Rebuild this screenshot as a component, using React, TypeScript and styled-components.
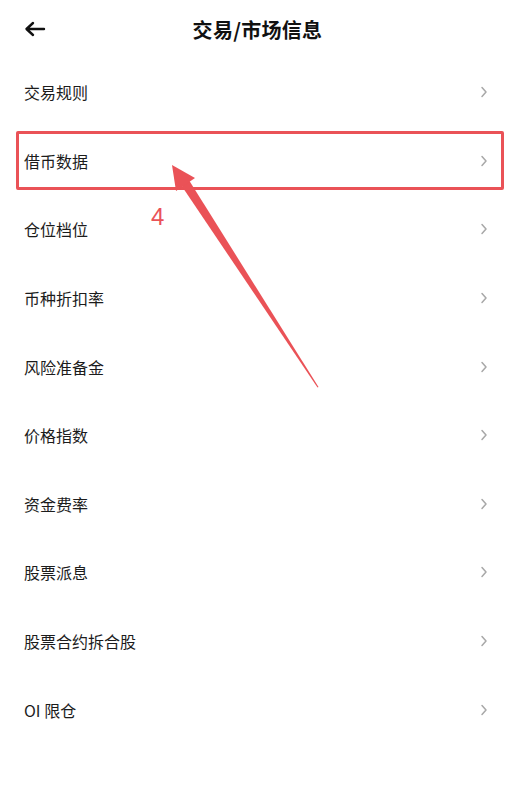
import React from "react";
import styled, { createGlobalStyle } from "styled-components";

const GlobalStyle = createGlobalStyle`
  html, body {
    margin: 0;
    padding: 0;
    background: #ffffff;
  }
  body {
    font-family: "Noto Sans CJK SC", "Noto Sans", sans-serif;
    color: #1a1a1a;
  }
`;

const Page = styled.div`
  position: relative;
  width: 515px;
  height: 805px;
  background: #ffffff;
  overflow: hidden;
`;

const Header = styled.div`
  display: flex;
  align-items: center;
  justify-content: center;
  position: relative;
  height: 58px;
`;

const BackButton = styled.div`
  position: absolute;
  left: 24px;
  top: 20px;
  width: 22px;
  height: 18px;
  display: flex;
  align-items: center;
  cursor: pointer;
`;

const Title = styled.h1`
  margin: 0;
  font-size: 20px;
  font-weight: 700;
  color: #111111;
  letter-spacing: 0.3px;
`;

const List = styled.div`
  display: flex;
  flex-direction: column;
`;

const Row = styled.div`
  display: flex;
  align-items: center;
  justify-content: space-between;
  height: 68.6px;
  padding: 0 27px 0 24px;
  box-sizing: border-box;
`;

const Label = styled.span`
  font-size: 16px;
  font-weight: 400;
  color: #1c1c1c;
`;

const Chevron = styled.svg`
  width: 8px;
  height: 12px;
`;

/* annotation overlay */
const Highlight = styled.div`
  position: absolute;
  left: 16px;
  top: 131px;
  width: 488px;
  height: 59px;
  box-sizing: border-box;
  border: 3px solid #ea5257;
  border-radius: 2px;
  pointer-events: none;
`;

const StepNumber = styled.span`
  position: absolute;
  left: 151px;
  top: 205px;
  font-family: "Liberation Sans", Arial, sans-serif;
  font-size: 24px;
  color: #ea5257;
  line-height: 1;
`;

const ArrowLayer = styled.svg`
  position: absolute;
  left: 0;
  top: 0;
  pointer-events: none;
`;

const items = [
  "交易规则",
  "借币数据",
  "仓位档位",
  "币种折扣率",
  "风险准备金",
  "价格指数",
  "资金费率",
  "股票派息",
  "股票合约拆合股",
  "OI 限仓",
];

export default function App() {
  return (
    <>
      <GlobalStyle />
      <Page>
        <Header>
          <BackButton>
            <svg width="22" height="16" viewBox="0 0 22 16" fill="none">
              <path
                d="M20 8H3M9 2L2.5 8L9 14"
                stroke="#111"
                strokeWidth="2.4"
                strokeLinecap="round"
                strokeLinejoin="round"
              />
            </svg>
          </BackButton>
          <Title>交易/市场信息</Title>
        </Header>
        <List>
          {items.map((label) => (
            <Row key={label}>
              <Label>{label}</Label>
              <Chevron viewBox="0 0 8 12" fill="none">
                <path
                  d="M2 1.5L6 6L2 10.5"
                  stroke="#a8a8a8"
                  strokeWidth="1.5"
                  strokeLinecap="round"
                  strokeLinejoin="round"
                />
              </Chevron>
            </Row>
          ))}
        </List>

        <Highlight />
        <StepNumber>4</StepNumber>
        <ArrowLayer width="515" height="805" viewBox="0 0 515 805">
          <path
            d="M318.5 387 L317.5 387.5 L179 182 L187 177 Z"
            fill="#ea5257"
          />
          <path d="M172 165 L195 178 L176 191 Z" fill="#ea5257" />
        </ArrowLayer>
      </Page>
    </>
  );
}
